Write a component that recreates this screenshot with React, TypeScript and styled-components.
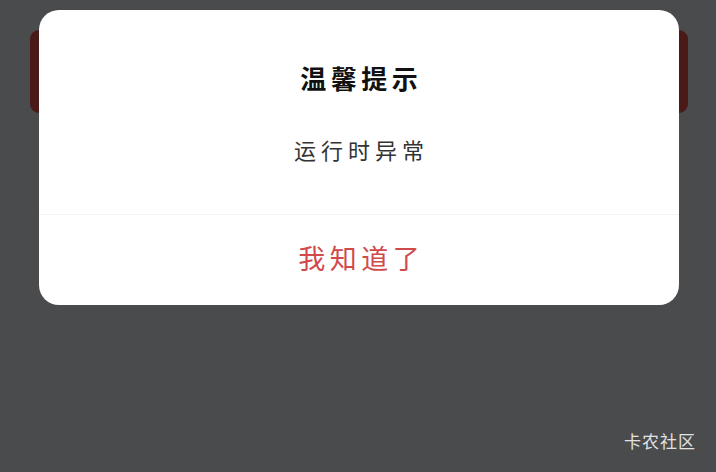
import styled, { createGlobalStyle } from "styled-components";

const GlobalStyle = createGlobalStyle`
  html, body {
    margin: 0;
    padding: 0;
    background: #4a4b4d;
  }
  body {
    font-family: "Noto Sans CJK SC", "Noto Sans", sans-serif;
  }
`;

const Page = styled.div`
  position: relative;
  width: 716px;
  height: 472px;
  overflow: hidden;
  background: #4a4b4d;
  padding: 30px 28px 0 30px;
  box-sizing: border-box;
`;

const Banner = styled.div`
  height: 83px;
  border-radius: 9px;
  background: #4a1a19;
`;

const Watermark = styled.div`
  position: absolute;
  right: 20px;
  bottom: 19px;
  font-size: 17px;
  letter-spacing: 1px;
  color: #e2e2e2;
`;

const Dialog = styled.div`
  position: absolute;
  top: 10px;
  left: 39px;
  width: 640px;
  height: 295px;
  border-radius: 20px;
  background: #ffffff;
  display: flex;
  flex-direction: column;
  overflow: hidden;
`;

const Body = styled.div`
  display: flex;
  flex-direction: column;
  align-items: center;
  padding: 55px 0 54px;
  border-bottom: 1px solid #f4f4f4;
`;

const Title = styled.h3`
  margin: 0;
  font-size: 26px;
  line-height: 26px;
  font-weight: 700;
  letter-spacing: 4.5px;
  padding-left: 4.5px;
  color: #111111;
`;

const Message = styled.p`
  margin: 47px 0 0;
  font-size: 22px;
  line-height: 22px;
  letter-spacing: 5px;
  padding-left: 5px;
  color: #333333;
`;

const ConfirmButton = styled.button`
  flex: 1;
  border: none;
  background: transparent;
  font-family: inherit;
  font-size: 27px;
  letter-spacing: 4.5px;
  padding: 0 0 6px 4.5px;
  color: #d04a4c;
  cursor: pointer;
`;

export default function App() {
  return (
    <>
      <GlobalStyle />
      <Page>
        <Banner />
        <Watermark>卡农社区</Watermark>
        <Dialog>
          <Body>
            <Title>温馨提示</Title>
            <Message>运行时异常</Message>
          </Body>
          <ConfirmButton>我知道了</ConfirmButton>
        </Dialog>
      </Page>
    </>
  );
}
